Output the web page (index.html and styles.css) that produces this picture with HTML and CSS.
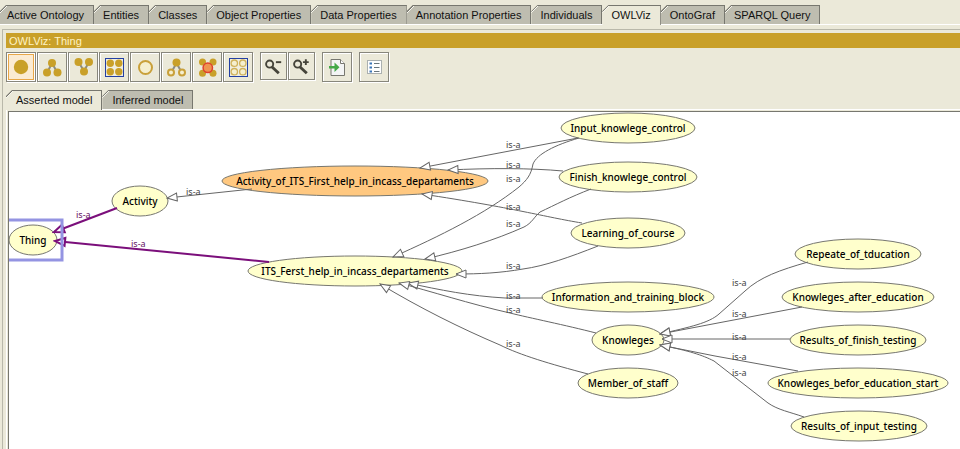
FILE: index.html
```html
<!DOCTYPE html>
<html lang="en">

<head>
    <meta charset="UTF-8">
    <meta name="viewport" content="width=device-width, initial-scale=1.0">
    <title>OWLViz</title>
    <link rel="stylesheet" href="styles.css">
</head>

<body>
    <div class="tabs mainTabs" role="tablist">
        <button class="tab" role="tab">Active Ontology</button>
        <button class="tab" role="tab">Entities</button>
        <button class="tab" role="tab">Classes</button>
        <button class="tab" role="tab">Object Properties</button>
        <button class="tab" role="tab">Data Properties</button>
        <button class="tab" role="tab">Annotation Properties</button>
        <button class="tab" role="tab">Individuals</button>
        <button class="tab active" role="tab" aria-selected="true">OWLViz</button>
        <button class="tab" role="tab">OntoGraf</button>
        <button class="tab" role="tab">SPARQL Query</button>
    </div>

    <div class="view">
        <h1 class="viewTitle">OWLViz: Thing</h1>

        <div class="toolbar">
            <div class="group">
                <button class="tool pressed" aria-label="Show class">
                    <svg viewBox="0 0 28 28"><circle class="gold" cx="14" cy="14" r="7.2"/></svg>
                </button>
                <button class="tool" aria-label="Show subclasses">
                    <svg viewBox="0 0 28 28">
                        <path class="link" d="M9 20L14 10L19.500 20"/>
                        <circle class="gold" cx="14" cy="10" r="4"/>
                        <circle class="gold" cx="9" cy="19.500" r="4"/>
                        <circle class="gold" cx="19.500" cy="19.500" r="4"/>
                    </svg>
                </button>
                <button class="tool" aria-label="Show superclasses">
                    <svg viewBox="0 0 28 28">
                        <path class="link" d="M9.500 9L15 18L20 9"/>
                        <circle class="gold" cx="9.500" cy="9" r="4"/>
                        <circle class="gold" cx="20" cy="9" r="4"/>
                        <circle class="gold" cx="15" cy="18.500" r="4"/>
                    </svg>
                </button>
                <button class="tool" aria-label="Show all classes">
                    <svg viewBox="0 0 28 28">
                        <rect class="frame" x="5.500" y="5.500" width="18" height="18"/>
                        <circle class="gold" cx="10.300" cy="10.200" r="3.700"/>
                        <circle class="gold" cx="18.800" cy="10.200" r="3.700"/>
                        <circle class="gold" cx="10.300" cy="18.700" r="3.700"/>
                        <circle class="gold" cx="18.800" cy="18.700" r="3.700"/>
                    </svg>
                </button>
                <button class="tool" aria-label="Hide class">
                    <svg viewBox="0 0 28 28"><circle class="ring" cx="14.500" cy="14.500" r="6.500"/></svg>
                </button>
                <button class="tool" aria-label="Hide subclasses">
                    <svg viewBox="0 0 28 28">
                        <path class="link" d="M9 20L14.500 10L20 20"/>
                        <circle class="gold" cx="14.500" cy="9.500" r="4"/>
                        <circle class="ring" cx="9" cy="19.500" r="3"/>
                        <circle class="ring" cx="20" cy="19.500" r="3"/>
                    </svg>
                </button>
                <button class="tool" aria-label="Hide classes past radius">
                    <svg viewBox="0 0 28 28">
                        <path class="redLink" d="M9.500 9L20 20M20 9L9.500 20"/>
                        <circle class="gold" cx="9.500" cy="9" r="3.500"/>
                        <circle class="gold" cx="20" cy="9" r="3.500"/>
                        <circle class="gold" cx="9.500" cy="20.300" r="3.500"/>
                        <circle class="gold" cx="20" cy="20.300" r="3.500"/>
                        <circle class="core" cx="14.800" cy="14.800" r="4.700"/>
                    </svg>
                </button>
                <button class="tool" aria-label="Hide all classes">
                    <svg viewBox="0 0 28 28">
                        <rect class="frame" x="5.500" y="5.500" width="18" height="18"/>
                        <circle class="ring thin" cx="10.300" cy="10.200" r="3.200"/>
                        <circle class="ring thin" cx="18.800" cy="10.200" r="3.200"/>
                        <circle class="ring thin" cx="10.300" cy="18.700" r="3.200"/>
                        <circle class="ring thin" cx="18.800" cy="18.700" r="3.200"/>
                    </svg>
                </button>
            </div>
            <div class="group">
                <button class="tool small" aria-label="Zoom out">
                    <svg viewBox="0 0 26 26">
                        <circle class="lens" cx="9" cy="11" r="3.700"/>
                        <path class="handle" d="M11.500 14L18.500 20.500"/>
                        <path class="sign" d="M15.500 9H21"/>
                    </svg>
                </button>
                <button class="tool small" aria-label="Zoom in">
                    <svg viewBox="0 0 26 26">
                        <circle class="lens" cx="9" cy="11" r="3.700"/>
                        <path class="handle" d="M11.500 14L18.500 20.500"/>
                        <path class="sign" d="M14.500 9H20.500M17.500 6V12"/>
                    </svg>
                </button>
            </div>
            <button class="tool" aria-label="Export to image">
                <svg viewBox="0 0 28 28">
                    <path class="page" d="M8 6.500H17.500L21.500 10.500V22.500H8Z"/>
                    <path class="fold" d="M17.500 6.500V10.500H21.500"/>
                    <path class="green" d="M6 13H11.500V9.500L16.500 14.200L11.500 19V15.500H6Z"/>
                </svg>
            </button>
            <button class="tool" aria-label="Options">
                <svg viewBox="0 0 28 28">
                    <rect class="sheet" x="7.500" y="7.500" width="14" height="13"/>
                    <path class="bullets" d="M9.500 10.500H12M9.500 14.500H12M9.500 18.500H12"/>
                    <path class="lines" d="M14 10.500H19.500M14 14.500H19.500M14 18.500H19.500"/>
                </svg>
            </button>
        </div>

        <div class="tabs modelTabs" role="tablist">
            <button class="tab active" role="tab" aria-selected="true">Asserted model</button>
            <button class="tab" role="tab">Inferred model</button>
        </div>

        <div class="pane">
            <div class="canvas">
                <svg class="graph" width="951" height="337" viewBox="9 112 951 337">
                    <defs>
                        <marker id="arrow" markerUnits="userSpaceOnUse" markerWidth="12" markerHeight="12" refX="11" refY="6" orient="auto">
                            <path d="M1 2L11 6L1 10Z" fill="#fff" stroke="#666"/>
                        </marker>
                        <marker id="arrowSel" markerUnits="userSpaceOnUse" markerWidth="14" markerHeight="12" refX="12" refY="6" orient="auto">
                            <path d="M2 2L12 6L2 10Z" fill="#fff" stroke="#7b0f7b" stroke-width="2"/>
                        </marker>
                    </defs>

                    <g class="nodes">
                        <ellipse cx="33" cy="240" rx="24" ry="15"/>
                        <text x="33" y="244">Thing</text>
                        <ellipse cx="140" cy="201" rx="28" ry="15"/>
                        <text x="140" y="205">Activity</text>
                        <ellipse class="current" cx="355" cy="181" rx="133" ry="15"/>
                        <text x="355" y="185">Activity_of_ITS_First_help_in_incass_departaments</text>
                        <ellipse cx="355" cy="271" rx="107" ry="15"/>
                        <text x="355" y="275">ITS_Ferst_help_in_incass_departaments</text>
                        <ellipse cx="628" cy="128" rx="67" ry="15"/>
                        <text x="628" y="132">Input_knowlege_control</text>
                        <ellipse cx="628" cy="177" rx="69" ry="15"/>
                        <text x="628" y="181">Finish_knowlege_control</text>
                        <ellipse cx="628" cy="233" rx="57" ry="15"/>
                        <text x="628" y="237">Learning_of_course</text>
                        <ellipse cx="628" cy="297" rx="86" ry="15"/>
                        <text x="628" y="301">Information_and_training_block</text>
                        <ellipse cx="628" cy="340" rx="36" ry="15"/>
                        <text x="628" y="344">Knowleges</text>
                        <ellipse cx="628" cy="383" rx="50" ry="15"/>
                        <text x="628" y="387">Member_of_staff</text>
                        <ellipse cx="858" cy="254" rx="63" ry="15"/>
                        <text x="858" y="258">Repeate_of_tducation</text>
                        <ellipse cx="858" cy="297" rx="76" ry="15"/>
                        <text x="858" y="301">Knowleges_after_education</text>
                        <ellipse cx="858" cy="340" rx="68" ry="15"/>
                        <text x="858" y="344">Results_of_finish_testing</text>
                        <ellipse cx="858" cy="383" rx="90" ry="15"/>
                        <text x="858" y="387">Knowleges_befor_education_start</text>
                        <ellipse cx="859" cy="426" rx="68" ry="15"/>
                        <text x="859" y="430">Results_of_input_testing</text>
                    </g>

                    <g class="edges">
                        <path d="M252 189L167 198"/>
                        <path d="M578 138L420 168"/>
                        <path d="M563 171C530 168 490 168 448 170"/>
                        <path d="M582 223C545 217 515 208 422 194"/>
                        <path d="M579 138C555 145 537 154 533 164C531 175 527 180 519 187C485 214 440 236 393 257"/>
                        <path d="M591 189C570 197 555 205 540 212C534 217 532 223 524 227C495 240 460 251 425 259"/>
                        <path d="M598 246C570 257 545 266 523 269C500 273 480 274 456 274"/>
                        <path d="M543 298H505C470 296 440 290 408 283"/>
                        <path d="M596 333C565 325 530 318 510 313C470 304 430 291 399 283"/>
                        <path d="M588 374C550 364 520 355 500 345C460 328 420 308 380 284"/>
                        <path d="M808 262C780 270 760 277 745 291L719 314C709 323 690 327 660 334"/>
                        <path d="M802 307L660 334"/>
                        <path d="M790 339H662"/>
                        <path d="M798 371L715 356L660 345"/>
                        <path d="M804 417C790 412 778 410 768 403L714 361C702 355 690 351 660 345"/>
                    </g>
                    <g class="edges selected">
                        <path d="M117 208L54 232"/>
                        <path d="M269 262L55 241"/>
                    </g>

                    <g class="labels">
                        <text x="186" y="195">is-a</text>
                        <text x="506" y="148">is-a</text>
                        <text x="506" y="168">is-a</text>
                        <text x="506" y="182">is-a</text>
                        <text x="506" y="210">is-a</text>
                        <text x="506" y="227">is-a</text>
                        <text x="506" y="269">is-a</text>
                        <text x="506" y="299">is-a</text>
                        <text x="506" y="313">is-a</text>
                        <text x="506" y="347">is-a</text>
                        <text x="732" y="286">is-a</text>
                        <text x="732" y="317">is-a</text>
                        <text x="732" y="340">is-a</text>
                        <text x="732" y="360">is-a</text>
                        <text x="732" y="376">is-a</text>
                        <text class="selected" x="76" y="218">is-a</text>
                        <text class="selected" x="131" y="247">is-a</text>
                    </g>

                    <rect class="selection" x="4" y="220" width="58" height="40"/>
                </svg>
            </div>
        </div>
    </div>
</body>

</html>
```

FILE: styles.css
```css
* {
    margin: 0;
    padding: 0;
    box-sizing: border-box;
}

body {
    display: flex;
    flex-direction: column;
    height: 100vh;
    overflow: hidden;
    background: #ebe9d9;
    color: #111;
    font: 11px/15px "Liberation Sans", Arial, sans-serif;
}

button {
    border: none;
    background: none;
    color: inherit;
    font: inherit;
}

/* tabs */
.tabs {
    display: flex;
    flex: none;
    padding-top: 5px;
    border-bottom: 1px solid #fff;
}

.tab {
    --face: #bebdb0;
    height: 19px;
    padding: 1px 9px 0;
    border-top: 1px solid #77776f;
    border-right: 1px solid #77776f;
    background: linear-gradient(135deg, #77776f 5px, #f8f7f0 5px, #f8f7f0 6px, var(--face) 6px) border-box;
    clip-path: polygon(6px 0, 100% 0, 100% 100%, 0 100%, 0 6px);
    white-space: nowrap;
}

.tab.active {
    --face: #ebe9d9;
    height: 20px;
    margin-bottom: -1px;
    padding-bottom: 1px;
}

.mainTabs .tab:first-child {
    padding-left: 7px;
}

/* view */
.view {
    display: flex;
    flex: 1;
    flex-direction: column;
    min-height: 0;
    margin: 4px 0 0 2px;
    padding: 3px 0 0 3px;
    border-top: 1px solid #b9b8aa;
    border-left: 1px solid #b9b8aa;
}

.viewTitle {
    padding: 1px 0 0 3px;
    background: #c9a029;
    color: #fff3c4;
    font-size: 11px;
    font-weight: normal;
    line-height: 14px;
}

.toolbar {
    display: flex;
    align-items: flex-start;
    gap: 7px;
    padding: 4px 0 1px;
}

.group {
    display: flex;
    gap: 1px;
}

.tool {
    width: 30px;
    height: 30px;
    border: 1px solid #87867c;
    box-shadow: 1px 1px #fff, inset 1px 1px #fff;
}

.tool.small {
    width: 27px;
    height: 28px;
}

.tool.pressed {
    background: #fbebd3;
    box-shadow: 1px 1px #fff, inset 0 0 0 1px #fff, inset 0 0 0 2px #e8a748;
}

.tool svg {
    display: block;
    width: 100%;
    height: 100%;
}

/* toolbar icons */
.gold {
    fill: #c9a029;
}

.ring {
    fill: #f5efcf;
    stroke: #c9a03a;
    stroke-width: 2;
}

.ring.thin {
    stroke: #d0b25c;
    stroke-width: 1.3;
}

.link {
    fill: none;
    stroke: #8c8c84;
    stroke-width: 2;
}

.redLink {
    stroke: #e0702c;
    stroke-width: 2;
}

.core {
    fill: #ee9450;
    stroke: #e0402c;
    stroke-width: 1.5;
}

.frame {
    fill: #f0eee0;
    stroke: #2440a4;
}

.lens,
.handle,
.sign {
    fill: none;
    stroke: #45443a;
    stroke-width: 2;
}

.handle {
    stroke-width: 3;
}

.page {
    fill: #f4f5f5;
    stroke: #77776f;
}

.fold {
    fill: #fff;
    stroke: #77776f;
}

.green {
    fill: #45a948;
}

.sheet {
    fill: #fff;
    stroke: #aab0b0;
}

.bullets {
    stroke: #3c76b8;
    stroke-width: 2;
}

.lines {
    stroke: #68757c;
}

/* graph */
.modelTabs {
    padding-top: 7px;
}

.modelTabs .tab {
    padding-left: 10px;
}

.pane {
    flex: 1;
    min-height: 0;
    padding: 1px 0 0 1px;
    border-left: 1px solid #fff;
}

.canvas {
    height: 100%;
    overflow: hidden;
    border-top: 1px solid #77776f;
    border-left: 1px solid #77776f;
    background: #fff;
}

.graph {
    display: block;
}

.edges path {
    fill: none;
    stroke: #666;
    marker-end: url(#arrow);
}

.edges.selected path {
    stroke: #7b0f7b;
    stroke-width: 2;
    marker-end: url(#arrowSel);
}

.labels text {
    fill: #444;
    font: 9px "Noto Sans", sans-serif;
}

.labels .selected {
    fill: #651065;
}

.nodes ellipse {
    fill: #ffffcc;
    stroke: #77776f;
}

.nodes .current {
    fill: #ffc880;
}

.nodes text {
    fill: #000;
    font: 500 10px "Noto Sans", sans-serif;
    text-anchor: middle;
}

.selection {
    fill: none;
    stroke: #9494e2;
    stroke-width: 3;
}
```
